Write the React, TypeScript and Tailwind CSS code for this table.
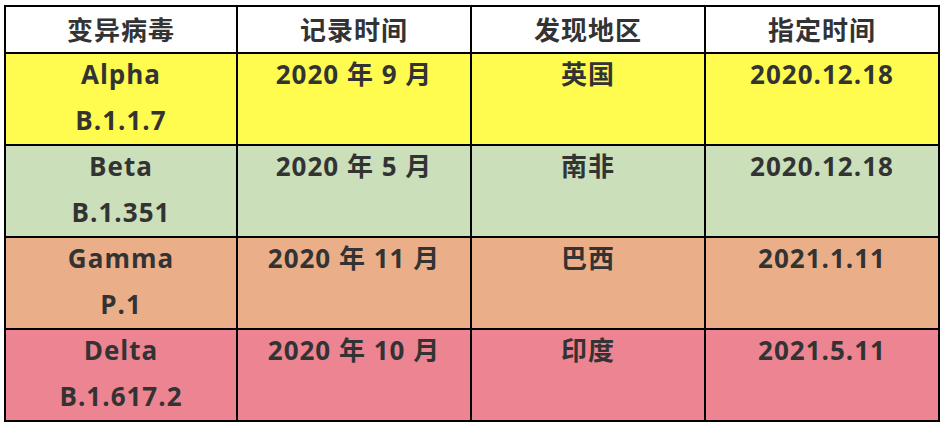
const rows = [
  { name: "Alpha", code: "B.1.1.7", found: "2020 年 9 月", place: "英国", date: "2020.12.18", bg: "bg-[#fffc4f]" },
  { name: "Beta", code: "B.1.351", found: "2020 年 5 月", place: "南非", date: "2020.12.18", bg: "bg-[#cadfba]" },
  { name: "Gamma", code: "P.1", found: "2020 年 11 月", place: "巴西", date: "2021.1.11", bg: "bg-[#eaaf89]" },
  { name: "Delta", code: "B.1.617.2", found: "2020 年 10 月", place: "印度", date: "2021.5.11", bg: "bg-[#ec8492]" },
];

const headers = ["变异病毒", "记录时间", "发现地区", "指定时间"];

export default function App() {
  return (
    <div className="w-[944px] h-[430px] bg-white pl-[4px] pt-[5px] font-['Open_Sans','Noto_Sans_CJK_SC',sans-serif] text-[#333]">
      <table className="w-[936px] table-fixed border-collapse border-2 border-black text-[26px] font-bold tracking-[1px]">
        <colgroup>
          <col className="w-[232px]" />
          <col className="w-[234px]" />
          <col className="w-[234px]" />
          <col className="w-[234px]" />
        </colgroup>
        <thead>
          <tr className="h-[47px] bg-white">
            {headers.map((h) => (
              <th key={h} className="border-2 border-black p-0 text-center align-middle leading-[44px] font-bold">
                {h}
              </th>
            ))}
          </tr>
        </thead>
        <tbody>
          {rows.map((r) => (
            <tr key={r.name} className={`h-[92px] ${r.bg}`}>
              <td className="border-2 border-black p-0 text-center align-top leading-[46px]">
                <div className="-mt-[3px] h-[90px]">
                  <div>{r.name}</div>
                  <div>{r.code}</div>
                </div>
              </td>
              <td className="border-2 border-black p-0 text-center align-top leading-[46px]">
                <div className="-mt-[3px] h-[90px]">{r.found}</div>
              </td>
              <td className="border-2 border-black p-0 text-center align-top leading-[46px]">
                <div className="-mt-[3px] h-[90px]">{r.place}</div>
              </td>
              <td className="border-2 border-black p-0 text-center align-top leading-[46px]">
                <div className="-mt-[3px] h-[90px]">{r.date}</div>
              </td>
            </tr>
          ))}
        </tbody>
      </table>
    </div>
  );
}
